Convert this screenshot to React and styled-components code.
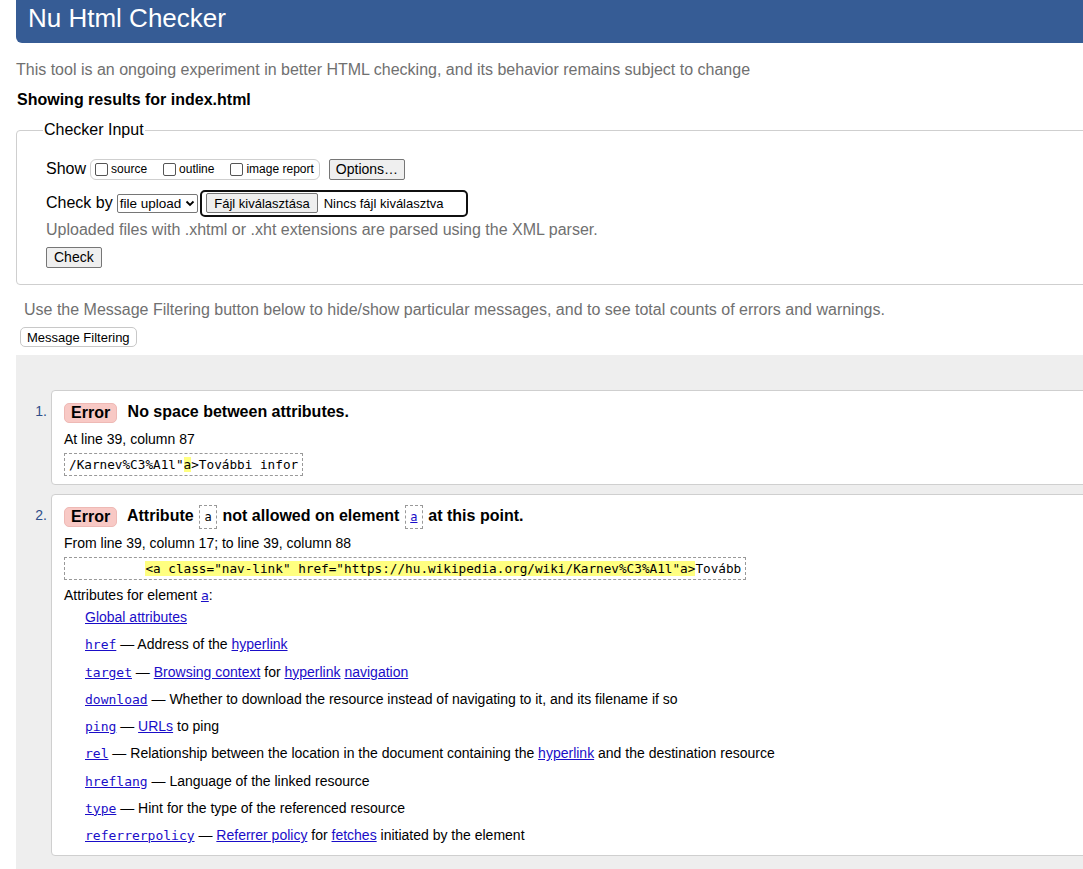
import React from 'react';
import styled, { createGlobalStyle } from 'styled-components';

const GlobalStyle = createGlobalStyle`
  html, body {
    margin: 0;
    padding: 0;
    overflow: hidden;
    background: #fff;
  }
  body {
    font-family: "Liberation Sans", Arial, sans-serif;
    color: #000;
  }
`;

const Page = styled.div`
  width: 1130px;
  padding: 0 0 0 16px;
`;

const Header = styled.header`
  height: 43px;
  background: #365c95;
  border-radius: 0 0 0 6px;
  display: flex;
  align-items: center;
  padding-left: 12px;
  h1 {
    margin: 0;
    margin-top: -6px;
    font-size: 26px;
    font-weight: normal;
    color: #fff;
  }
`;

const Intro = styled.p`
  margin: ${p => (p.$mt ?? 17)}px 0 0;
  font-size: 16px;
  color: #707070;
  line-height: 20px;
  padding-left: ${p => p.$indent || 0}px;
`;

const Showing = styled.p`
  margin: 10px 0 0 1px;
  font-size: 16px;
  font-weight: bold;
  line-height: 20px;
`;

const Fieldset = styled.fieldset`
  margin: 11px 0 0;
  padding: 7px 29px 16px;
  border: 1px solid #cfcfcf;
  border-radius: 4px;
  legend {
    font-size: 16px;
    padding: 0 1px;
    margin-left: -3px;
  }
`;

const Row = styled.div`
  display: flex;
  align-items: center;
  gap: ${p => p.$gap || 4}px;
  margin-top: ${p => p.$mt || 0}px;
  font-size: 16px;
  height: ${p => p.$h || 22}px;
  padding-left: ${p => p.$pl || 0}px;
`;

const CheckGroup = styled.div`
  display: flex;
  align-items: center;
  height: 19px;
  border: 1px solid #cfcfcf;
  border-radius: 6px;
  padding: 0 5px 0 4px;
  margin-right: 5px;
  label {
    display: flex;
    align-items: center;
    font-size: 12px;
    margin-right: 16px;
    &:last-child { margin-right: 0; }
  }
`;

const Box = styled.span`
  width: 11px;
  height: 11px;
  border: 1px solid #555;
  border-radius: 2px;
  margin-right: 3px;
  background: #fff;
`;

const Button = styled.button`
  font-family: "Liberation Sans", Arial, sans-serif;
  font-size: ${p => p.$fs || 13}px;
  color: #000;
  background: ${p => (p.$flat ? '#fff' : '#efefef')};
  border: 1px solid ${p => (p.$flat ? '#c8c8c8' : '#767676')};
  border-radius: ${p => (p.$flat ? 5 : 2)}px;
  padding: 0 ${p => p.$px || 6}px;
  height: ${p => p.$h || 21}px;
  cursor: pointer;
`;

const Select = styled.div`
  display: flex;
  align-items: center;
  gap: 4px;
  height: 17px;
  border: 1px solid #767676;
  border-radius: 2px;
  padding: 0 2px 0 2px;
  font-size: 13.5px;
  svg { width: 10px; height: 10px; }
`;

const FileInput = styled.div`
  display: flex;
  align-items: center;
  height: 23px;
  width: 256px;
  border: 2px solid #101010;
  border-radius: 5px;
  padding: 0 4px;
  box-sizing: content-box;
  font-size: 13px;
  gap: 6px;
  margin-left: -2px;
`;

const Results = styled.div`
  margin-top: 8px;
  background: #eeeeee;
  padding: 35px 0 30px 0;
`;

const Item = styled.div`
  display: grid;
  grid-template-columns: 35px 1fr;
  margin-bottom: 9px;
`;

const Num = styled.div`
  font-size: 14px;
  color: #2f4f8a;
  text-align: right;
  padding: 13px 4px 0 0;
`;

const Card = styled.div`
  background: #fff;
  border: 1px solid #cfcfcf;
  border-radius: 4px 0 0 4px;
  padding: 9px 12px 8px;
`;

const Title = styled.div`
  font-size: 16px;
  font-weight: bold;
  line-height: 24px;
  height: 24px;
  white-space: nowrap;
`;

const Badge = styled.span`
  display: inline-block;
  background: #f8c9c5;
  border: 1px solid #eeb9b5;
  border-radius: 5px;
  padding: 1px 6px;
  margin-right: 6px;
  line-height: 16px;
  vertical-align: middle;
`;

const InlineCode = styled.span`
  display: inline-flex;
  align-items: center;
  justify-content: center;
  width: 16px;
  height: 22px;
  vertical-align: middle;
  margin: 0 1px;
  font-family: "DejaVu Sans Mono", "Liberation Mono", monospace;
  font-size: 12px;
  font-weight: normal;
  border: 1px dashed #999;
  a { color: #1a0dc8; }
`;

const Loc = styled.p`
  margin: ${p => p.$mt || 6}px 0 0;
  font-size: 14px;
  line-height: 18px;
`;

const Extract = styled.div`
  margin-top: 5px;
  display: inline-block;
  border: 1px dashed #999;
  padding: 2px 4px;
  font-family: "DejaVu Sans Mono", "Liberation Mono", monospace;
  font-size: 12.7px;
  line-height: 17px;
  white-space: pre;
  mark { background: #ffff80; }
`;

const Link = styled.a`
  color: #1a0dc8;
  text-decoration: underline;
`;

const CodeLink = styled(Link)`
  font-family: "DejaVu Sans Mono", "Liberation Mono", monospace;
  font-size: 13px;
  line-height: 1;
`;

const AttrList = styled.dl`
  margin: 4px 0 3px;
  padding-left: 21px;
  display: grid;
  grid-auto-rows: 18px;
  row-gap: 9.25px;
  font-size: 14px;
  line-height: 18px;
  dt, dd { margin: 0; white-space: nowrap; }
`;

const attrs = [
  ['href', <>Address of the <Link href="#">hyperlink</Link></>],
  ['target', <><Link href="#">Browsing context</Link> for <Link href="#">hyperlink</Link> <Link href="#">navigation</Link></>],
  ['download', <>Whether to download the resource instead of navigating to it, and its filename if so</>],
  ['ping', <><Link href="#">URLs</Link> to ping</>],
  ['rel', <>Relationship between the location in the document containing the <Link href="#">hyperlink</Link> and the destination resource</>],
  ['hreflang', <>Language of the linked resource</>],
  ['type', <>Hint for the type of the referenced resource</>],
  ['referrerpolicy', <><Link href="#">Referrer policy</Link> for <Link href="#">fetches</Link> initiated by the element</>],
];

const Check = ({ children }) => (
  <label><Box />{children}</label>
);

export default function App() {
  return (
    <Page>
      <GlobalStyle />
      <Header><h1>Nu Html Checker</h1></Header>
      <Intro>This tool is an ongoing experiment in better HTML checking, and its behavior remains subject to change</Intro>
      <Showing>Showing results for index.html</Showing>
      <Fieldset>
        <legend>Checker Input</legend>
        <Row $mt={12}>
          Show
          <CheckGroup>
            <Check>source</Check>
            <Check>outline</Check>
            <Check>image report</Check>
          </CheckGroup>
          <Button $fs={14}>Options…</Button>
        </Row>
        <Row $mt={9} $h={28}>
          Check by
          <Select>
            file upload
            <svg viewBox="0 0 10 10"><path d="M1.5 3.5 L5 7 L8.5 3.5" fill="none" stroke="#000" strokeWidth="1.8" /></svg>
          </Select>
          <FileInput>
            <Button $h={20} $px={7}>Fájl kiválasztása</Button>
            Nincs fájl kiválasztva
          </FileInput>
        </Row>
        <Intro $mt={3}>Uploaded files with .xhtml or .xht extensions are parsed using the XML parser.</Intro>
        <Row $mt={6}>
          <Button $fs={14} $px={7}>Check</Button>
        </Row>
      </Fieldset>
      <Intro $indent={8} $mt={15}>Use the Message Filtering button below to hide/show particular messages, and to see total counts of errors and warnings.</Intro>
      <Row $mt={7} $pl={4} $h={20}>
        <Button $flat $h={20}>Message Filtering</Button>
      </Row>
      <Results>
        <Item>
          <Num>1.</Num>
          <Card>
            <Title><Badge>Error</Badge> No space between attributes.</Title>
            <Loc>At line 39, column 87</Loc>
            <Extract>/Karnev%C3%A1l"<mark>a</mark>&gt;További infor</Extract>
          </Card>
        </Item>
        <Item>
          <Num>2.</Num>
          <Card>
            <Title>
              <Badge>Error</Badge> Attribute <InlineCode>a</InlineCode> not allowed on element <InlineCode><a href="#">a</a></InlineCode> at this point.
            </Title>
            <Loc>From line 39, column 17; to line 39, column 88</Loc>
            <Extract>{'          '}<mark>&lt;a class="nav-link" href="https://hu.wikipedia.org/wiki/Karnev%C3%A1l"a&gt;</mark>Tovább</Extract>
            <Loc $mt={6}>Attributes for element <CodeLink href="#">a</CodeLink>:</Loc>
            <AttrList>
              <dt><Link href="#">Global attributes</Link></dt>
              {attrs.map(([name, desc]) => (
                <dd key={name}><CodeLink href="#">{name}</CodeLink> — {desc}</dd>
              ))}
            </AttrList>
          </Card>
        </Item>
      </Results>
    </Page>
  );
}
